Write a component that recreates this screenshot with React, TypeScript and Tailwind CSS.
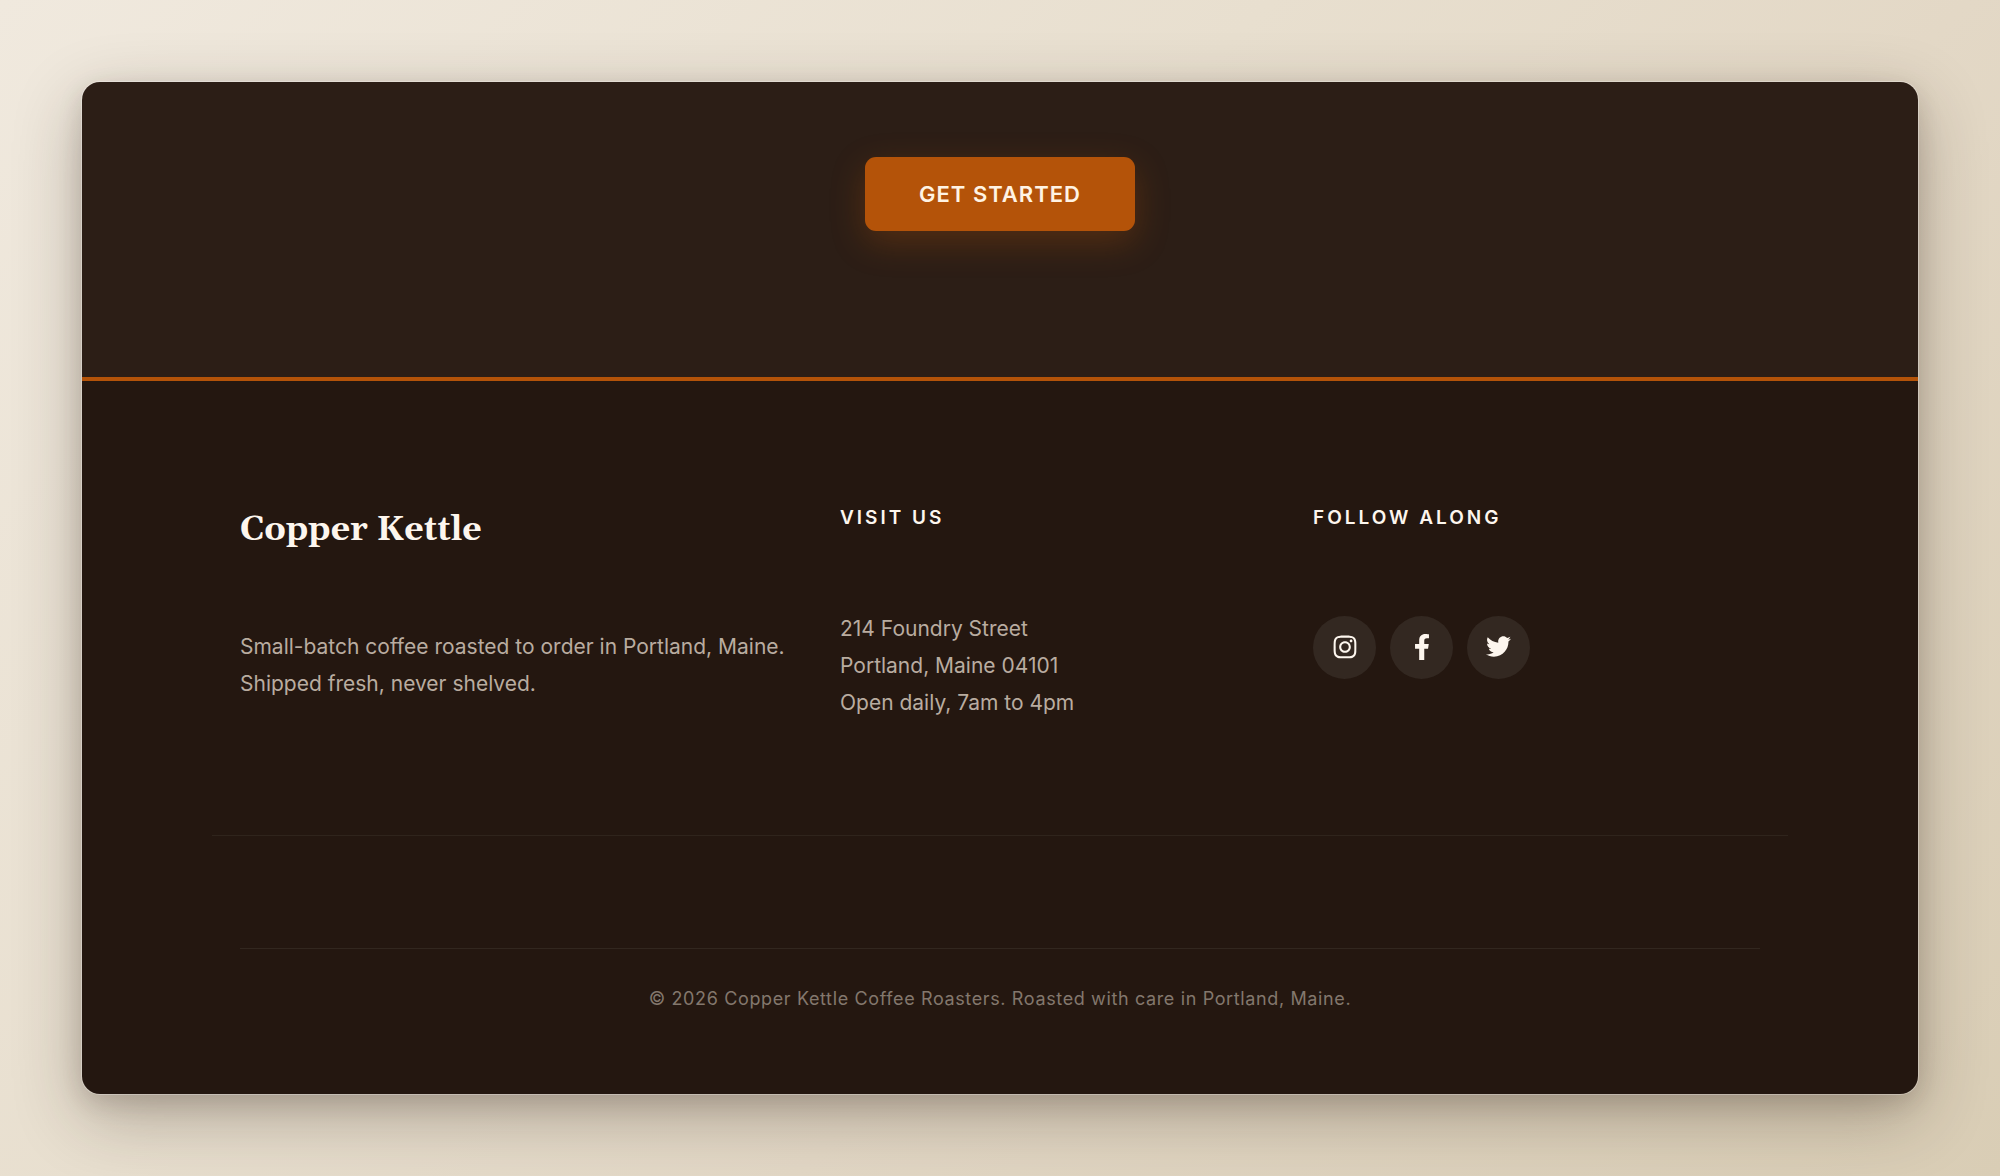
import React from "react";
import { FaFacebookF, FaInstagram, FaTwitter } from "react-icons/fa";

const socials = [
  { label: "Instagram", icon: <FaInstagram size={26} /> },
  { label: "Facebook", icon: <FaFacebookF size={26} /> },
  { label: "Twitter", icon: <FaTwitter size={25} /> },
];

function CallToAction() {
  return (
    <section className="flex justify-center border-b-4 border-[#b45309] bg-[#2c1e16] pt-[75px] pb-[146px]">
      <button
        type="button"
        className="rounded-[11px] bg-[#b45309] px-[54px] py-[23px] text-[22px] leading-7 font-semibold tracking-[1px] text-[#fff3e4] shadow-[0_11px_34px_rgba(180,83,9,0.3)]"
      >
        GET STARTED
      </button>
    </section>
  );
}

function ColumnTitle({ children }: { children: React.ReactNode }) {
  return <h3 className="text-[19px] leading-[30px] font-semibold tracking-[3px] text-[#fdf6ee]">{children}</h3>;
}

function Footer() {
  return (
    <footer className="bg-[#241710] px-[130px] pt-[122px] pb-[81px]">
      <div className="grid grid-cols-[600fr_473fr_503fr] border-b border-[#2f241c] pb-[114px]">
        <div className="pl-7">
          <h2 className="font-['Georgia','Gelasio','Liberation_Serif',serif] text-[34px] leading-[54px] font-bold text-[#fdf6ee]">
            Copper Kettle
          </h2>
          <p className="mt-[71px] text-[21px] leading-[37px] text-[#b9aca0]">
            Small-batch coffee roasted to order in Portland, Maine.
            <br />
            Shipped fresh, never shelved.
          </p>
        </div>
        <div className="px-7">
          <ColumnTitle>VISIT US</ColumnTitle>
          <address className="mt-[77px] text-[21px] leading-[37px] text-[#b9aca0] not-italic">
            214 Foundry Street
            <br />
            Portland, Maine 04101
            <br />
            Open daily, 7am to 4pm
          </address>
        </div>
        <div className="px-7">
          <ColumnTitle>FOLLOW ALONG</ColumnTitle>
          <ul className="mt-[83px] flex gap-[14px]">
            {socials.map((s) => (
              <li key={s.label}>
                <a
                  href="#"
                  aria-label={s.label}
                  className="flex size-[63px] items-center justify-center rounded-full bg-[#332821] pb-0.5 text-[#fdf6ee]"
                >
                  {s.icon}
                </a>
              </li>
            ))}
          </ul>
        </div>
      </div>
      <div className="mx-7 mt-28 border-t border-[#32271f] pt-9">
        <p className="text-center text-[18px] leading-7 tracking-[0.035em] text-[#83776d]">
          © 2026 Copper Kettle Coffee Roasters. Roasted with care in Portland, Maine.
        </p>
      </div>
    </footer>
  );
}

export default function App() {
  return (
    <div className="min-h-screen bg-[linear-gradient(135deg,#f0e9de_0%,#e8dfcf_40%,#e3d8c6_62%,#d9cdb5_100%)] p-[82px] font-['Inter',sans-serif]">
      <main className="overflow-hidden rounded-[18px] shadow-[0_0_0_1px_rgba(255,255,255,0.3),0_22px_68px_rgba(44,30,20,0.3),0_8px_24px_rgba(44,30,20,0.15)]">
        <CallToAction />
        <Footer />
      </main>
    </div>
  );
}
